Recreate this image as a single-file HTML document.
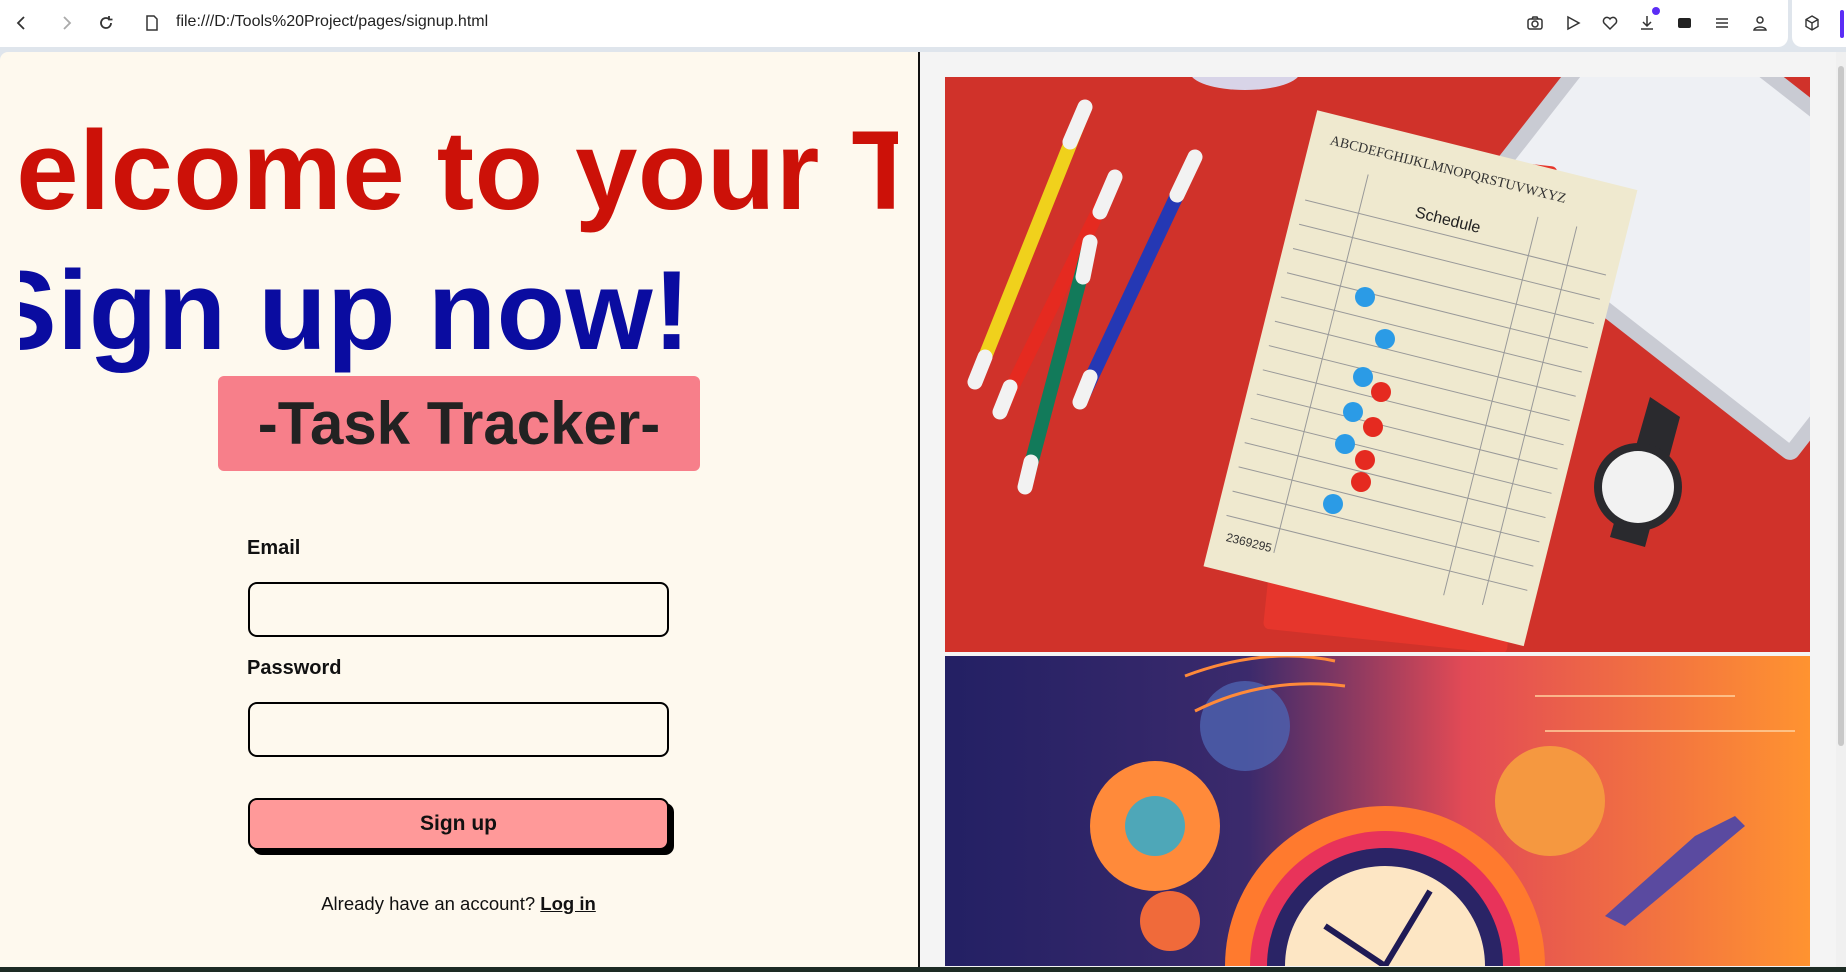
<!DOCTYPE html>
<html><head><meta charset="utf-8"><style>
*{margin:0;padding:0;box-sizing:border-box}
html,body{width:1846px;height:972px;overflow:hidden;background:#dfe5ec;font-family:"Liberation Sans",sans-serif}
.bar{position:absolute;left:0;top:0;width:1788px;height:47px;background:#fff;border-radius:0 0 10px 0}
.bar2{position:absolute;left:1792px;top:0;width:54px;height:47px;background:#fff;border-radius:0 0 0 10px}
.url{position:absolute;left:176px;top:13px;font-size:16px;color:#222}
.ic{position:absolute;top:14px;width:18px;height:18px}
.left{position:absolute;left:0;top:52px;width:918px;height:915px;background:#fef9ee;border-radius:8px 0 0 0}
.div{position:absolute;left:918px;top:52px;width:2px;height:915px;background:#111}
.right{position:absolute;left:920px;top:52px;width:916px;height:915px;background:#f4f4f4}
.sb{position:absolute;left:1836px;top:52px;width:10px;height:915px;background:#f0f0f0}
.clip{position:absolute;left:20px;top:100px;width:878px;height:280px;overflow:hidden}
.h1{position:absolute;white-space:nowrap;font-weight:bold;font-size:112px;letter-spacing:0.5px}
.tt{position:absolute;left:218px;top:376px;width:482px;height:95px;background:#f77f8a;border-radius:6px;font-size:60px;font-weight:bold;color:#222;text-align:center;line-height:95px}
.lbl{position:absolute;left:247px;font-size:20px;font-weight:bold;color:#111}
.in{position:absolute;left:248px;width:421px;height:55px;border:2.5px solid #000;border-radius:9px}
.btn{position:absolute;left:248px;top:798px;width:421px;height:52px;background:#ff9999;border:2.5px solid #000;border-radius:9px;box-shadow:5px 5px 0 #000;text-align:center;line-height:47px;font-size:21px;font-weight:bold;color:#111}
.al{position:absolute;left:248px;width:421px;top:893px;text-align:center;font-size:18.5px;color:#111}
.al u{font-weight:bold}
.bot{position:absolute;left:0;top:967px;width:1846px;height:5px;background:#1d2b24}
svg{display:block}
</style></head><body>
<div class="bar"></div><div class="bar2"></div>
<svg class="ic" style="left:13px" viewBox="0 0 18 18"><path d="M11 3 5 9l6 6" fill="none" stroke="#333" stroke-width="1.8"/></svg>
<svg class="ic" style="left:57px" viewBox="0 0 18 18"><path d="M7 3l6 6-6 6" fill="none" stroke="#aaa" stroke-width="1.8"/></svg>
<svg class="ic" style="left:97px" viewBox="0 0 18 18"><path d="M14 9a5 5 0 1 1-2-4M12 2v3.5h3.5" fill="none" stroke="#333" stroke-width="1.8"/></svg>
<svg class="ic" style="left:143px" viewBox="0 0 18 18"><path d="M4 2h7l3 3v11H4z" fill="none" stroke="#333" stroke-width="1.5"/></svg>
<div class="url">file:///D:/Tools%20Project/pages/signup.html</div>
<svg class="ic" style="left:1526px" viewBox="0 0 18 18"><rect x="2" y="5" width="14" height="10" rx="2" fill="none" stroke="#333" stroke-width="1.5"/><circle cx="9" cy="10" r="3" fill="none" stroke="#333" stroke-width="1.5"/><path d="M6 5l1-2h4l1 2" fill="none" stroke="#333" stroke-width="1.5"/></svg>
<svg class="ic" style="left:1564px" viewBox="0 0 18 18"><path d="M4 3l11 6-11 6z" fill="none" stroke="#333" stroke-width="1.5"/></svg>
<svg class="ic" style="left:1601px" viewBox="0 0 18 18"><path d="M9 15 3 9a3.5 3.5 0 0 1 6-4 3.5 3.5 0 0 1 6 4z" fill="none" stroke="#333" stroke-width="1.5"/></svg>
<svg class="ic" style="left:1638px" viewBox="0 0 18 18"><path d="M9 2v10M5 8l4 4 4-4M3 15h12" fill="none" stroke="#333" stroke-width="1.5"/></svg>
<div style="position:absolute;left:1652px;top:7px;width:8px;height:8px;border-radius:50%;background:#5b2df5"></div>
<svg class="ic" style="left:1676px" viewBox="0 0 18 18"><rect x="2" y="4" width="13" height="10" rx="2" fill="#222"/></svg>
<svg class="ic" style="left:1713px" viewBox="0 0 18 18"><path d="M3 5h12M3 9h12M3 13h12" stroke="#333" stroke-width="1.5"/></svg>
<svg class="ic" style="left:1751px" viewBox="0 0 18 18"><circle cx="9" cy="6" r="3" fill="none" stroke="#333" stroke-width="1.5"/><path d="M3 16c1-4 11-4 12 0z" fill="none" stroke="#333" stroke-width="1.5"/></svg>
<svg class="ic" style="left:1803px" viewBox="0 0 18 18"><path d="M9 2l6 3.5v7L9 16 3 12.5v-7zM3 5.5 9 9l6-3.5M9 9v7" fill="none" stroke="#333" stroke-width="1.4"/></svg>
<div style="position:absolute;left:1840px;top:10px;width:4px;height:28px;background:#5b2df5;border-radius:2px"></div>

<div class="left"></div>
<div class="clip">
 <div class="h1" style="left:-108px;top:6px;color:#cc1108">Welcome to your Task Tracker</div>
 <div class="h1" style="left:-38px;top:146px;color:#0a0ca0">Sign up now!</div>
</div>
<div class="tt">-Task Tracker-</div>
<div class="lbl" style="top:537px">Email</div>
<div class="in" style="top:582px"></div>
<div class="lbl" style="top:657px">Password</div>
<div class="in" style="top:702px"></div>
<div class="btn">Sign up</div>
<div class="al">Already have an account? <u>Log in</u></div>
<div class="div"></div>
<div class="right"></div>
<div class="sb"><div style="margin:14px 2px;width:6px;height:680px;background:#c8c8c8;border-radius:3px"></div></div>

<svg style="position:absolute;left:945px;top:77px;overflow:hidden" width="865" height="575" viewBox="0 0 865 575">
<rect width="865" height="575" fill="#d0322a"/>
<g transform="rotate(38 700 120)"><rect x="560" y="-60" width="420" height="300" rx="10" fill="#c9cbd3"/><rect x="575" y="-45" width="390" height="270" fill="#eef0f4"/></g>
<rect x="345" y="75" width="245" height="490" rx="6" fill="#e6362c" transform="rotate(6 460 300)"/>
<g transform="rotate(14 450 300)"><rect x="310" y="60" width="330" height="470" fill="#efe9cf"/>
<text x="330" y="90" font-size="14" font-family="Liberation Serif" fill="#333">ABCDEFGHIJKLMNOPQRSTUVWXYZ</text>
<text x="430" y="140" font-size="16" fill="#222">Schedule</text>
<g stroke="#999" stroke-width="1"><path d="M320 150h310M320 175h310M320 200h310M320 225h310M320 250h310M320 275h310M320 300h310M320 325h310M320 350h310M320 375h310M320 400h310M320 425h310M320 450h310M320 475h310M375 110v390M550 110v390M590 110v390"/></g>
<text x="325" y="500" font-size="12" fill="#333">2369295</text></g>
<g fill="#2b9be6"><circle cx="420" cy="220" r="10"/><circle cx="440" cy="262" r="10"/><circle cx="418" cy="300" r="10"/><circle cx="408" cy="335" r="10"/><circle cx="400" cy="367" r="10"/><circle cx="388" cy="427" r="10"/></g>
<g fill="#e52a20"><circle cx="436" cy="315" r="10"/><circle cx="428" cy="350" r="10"/><circle cx="420" cy="383" r="10"/><circle cx="416" cy="405" r="10"/></g>
<g stroke-linecap="round"><path d="M140 30 30 305" stroke="#f0d11c" stroke-width="14"/><path d="M170 100 55 335" stroke="#e52a20" stroke-width="14"/><path d="M250 80 135 325" stroke="#2538b4" stroke-width="14"/><path d="M145 165 80 410" stroke="#127a5a" stroke-width="14"/>
<path d="M140 30 125 65M170 100 155 135M250 80 232 118M145 165 138 200M30 305 40 280M55 335 65 310M135 325 145 300M80 410 86 385" stroke="#f2f2f2" stroke-width="15"/></g>
<path d="M705 320 735 340 700 470 665 460z" fill="#2a2a2e"/><circle cx="693" cy="410" r="44" fill="#2a2a2e"/><circle cx="693" cy="410" r="36" fill="#f2f2f2"/>
<ellipse cx="300" cy="-5" rx="55" ry="18" fill="#d8d4e8"/>
</svg>

<svg style="position:absolute;left:945px;top:656px;overflow:hidden" width="865" height="310" viewBox="0 0 865 310">
<defs><linearGradient id="g" x1="0" x2="1"><stop offset="0" stop-color="#232064"/><stop offset=".35" stop-color="#3b2a6c"/><stop offset=".6" stop-color="#e24a55"/><stop offset="1" stop-color="#ff9330"/></linearGradient></defs>
<rect width="865" height="310" fill="url(#g)"/>
<circle cx="210" cy="170" r="65" fill="#ff8a3a"/><circle cx="210" cy="170" r="30" fill="#4ea7b8"/>
<circle cx="300" cy="70" r="45" fill="#4e63b0" opacity=".8"/>
<circle cx="605" cy="145" r="55" fill="#f59840"/>
<circle cx="440" cy="310" r="160" fill="#ff7a2e"/><circle cx="440" cy="310" r="135" fill="#e8335a"/><circle cx="440" cy="310" r="118" fill="#2a2466"/><circle cx="440" cy="310" r="100" fill="#fde6c4"/>
<path d="M440 310 380 270M440 310 485 235" stroke="#1f1a55" stroke-width="6"/>
<circle cx="225" cy="265" r="30" fill="#f06a3a"/>
<path d="M240 20q80-30 150-15M250 55q70-35 150-25" stroke="#ff8a3a" stroke-width="3" fill="none"/>
<path d="M590 40h200M600 75h250" stroke="#ffd2a0" stroke-width="1.5"/>
<path d="M750 180 790 160 800 170 680 270 660 260z" fill="#5a4aa0"/>
</svg>
<div class="bot"></div>
</body></html>
